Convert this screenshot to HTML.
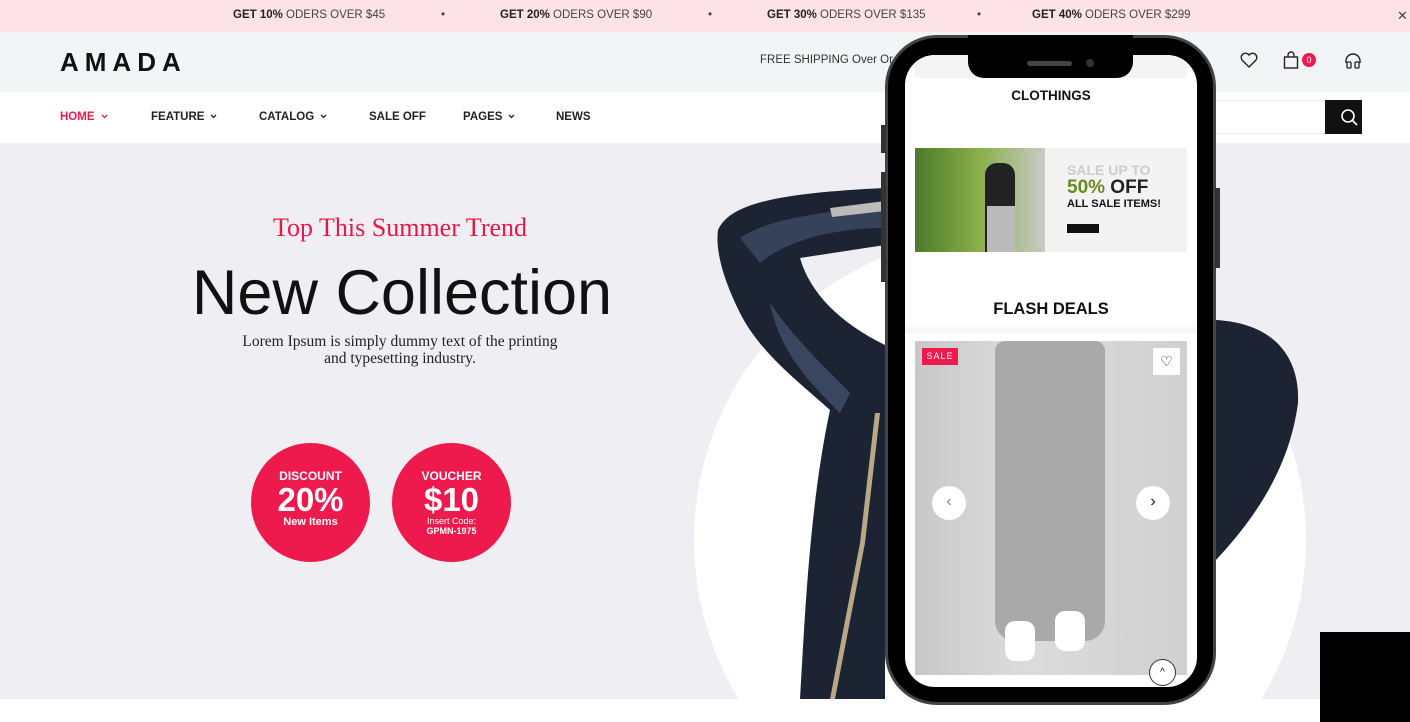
<!DOCTYPE html>
<html><head><meta charset="utf-8"><style>
*{margin:0;padding:0;box-sizing:border-box}
html,body{width:1410px;height:722px;overflow:hidden}
body{position:relative;background:#fff;font-family:"Liberation Sans",sans-serif}
.abs{position:absolute}
.top{left:0;top:0;width:1410px;height:32px;background:#fde3e7;font-size:11.5px;color:#444}
.top span{position:absolute;top:9px;white-space:nowrap}
.top b{color:#222}
.hdr{left:0;top:32px;width:1410px;height:60px;background:#f3f4f6}
.nav{left:0;top:92px;width:1410px;height:51px;background:#fff;font-size:11.5px;font-weight:bold;color:#222}
.nav span{position:absolute;top:19px;white-space:nowrap}
.nav svg{margin-left:6px;vertical-align:1px}
.hero{left:0;top:143px;width:1410px;height:556px;background:#efeff3;overflow:hidden}
.circ{border-radius:50%;background:#ee1a4d;color:#fff;text-align:center;width:119px;height:119px}
</style></head><body>
<div class="abs top">
<span style="left:233px"><b>GET 10%</b> ODERS OVER $45</span>
<span style="left:441px">•</span>
<span style="left:500px"><b>GET 20%</b> ODERS OVER $90</span>
<span style="left:708px">•</span>
<span style="left:767px"><b>GET 30%</b> ODERS OVER $135</span>
<span style="left:977px">•</span>
<span style="left:1032px"><b>GET 40%</b> ODERS OVER $299</span>
<span style="left:1397px;top:8px;font-size:13px">✕</span>
</div>
<div class="abs hdr">
<div class="abs" style="left:60px;top:15px;font-size:26px;font-weight:bold;letter-spacing:6px;color:#111">AMADA</div>
<div class="abs" style="left:760px;top:22px;font-size:11.5px;color:#333">FREE SHIPPING Over Or</div>
<svg class="abs" style="left:1240px;top:20px" width="18" height="16" viewBox="0 0 18 16"><path d="M9 15L2 8A4 4 0 0 1 9 3A4 4 0 0 1 16 8Z" fill="none" stroke="#222" stroke-width="1.4"/></svg>
<svg class="abs" style="left:1283px;top:19px" width="16" height="18" viewBox="0 0 16 18"><rect x="1.5" y="6" width="13" height="11" fill="none" stroke="#222" stroke-width="1.4"/><path d="M5 6V4a3 3 0 0 1 6 0v2" fill="none" stroke="#222" stroke-width="1.4"/></svg>
<div class="abs" style="left:1302px;top:21px;width:14px;height:14px;border-radius:50%;background:#ee1a4d;color:#fff;font-size:9px;text-align:center;line-height:14px">0</div>
<svg class="abs" style="left:1344px;top:20px" width="18" height="18" viewBox="0 0 18 18"><path d="M2 11V9a7 7 0 0 1 14 0v2" fill="none" stroke="#222" stroke-width="1.4"/><rect x="3" y="10" width="4" height="6" rx="1" fill="none" stroke="#222" stroke-width="1.3"/><rect x="11" y="10" width="4" height="6" rx="1" fill="none" stroke="#222" stroke-width="1.3"/></svg>
</div>
<div class="abs nav">
<span style="left:60px;color:#ee1a4d">HOME<svg width="7" height="5" viewBox="0 0 7 5"><path d="M1 1l2.5 2.5L6 1" fill="none" stroke="#ee1a4d" stroke-width="1.3"/></svg></span>
<span style="left:151px">FEATURE<svg width="7" height="5" viewBox="0 0 7 5"><path d="M1 1l2.5 2.5L6 1" fill="none" stroke="#222" stroke-width="1.3"/></svg></span>
<span style="left:259px">CATALOG<svg width="7" height="5" viewBox="0 0 7 5"><path d="M1 1l2.5 2.5L6 1" fill="none" stroke="#222" stroke-width="1.3"/></svg></span>
<span style="left:369px">SALE OFF</span>
<span style="left:463px">PAGES<svg width="7" height="5" viewBox="0 0 7 5"><path d="M1 1l2.5 2.5L6 1" fill="none" stroke="#222" stroke-width="1.3"/></svg></span>
<span style="left:556px">NEWS</span>
<div class="abs" style="left:1190px;top:8px;width:136px;height:34px;border:1px solid #eee;border-right:none"></div>
<div class="abs" style="left:1325px;top:8px;width:37px;height:34px;background:#111"><svg width="37" height="34" viewBox="0 0 37 34"><circle cx="17" cy="16" r="6" fill="none" stroke="#fff" stroke-width="1.6"/><path d="M21.5 20.5L26 25" stroke="#fff" stroke-width="1.6"/></svg></div>
</div>
<div class="abs hero">
<div class="abs" style="left:694px;top:91px;width:612px;height:612px;border-radius:50%;background:#fff"></div>
<svg class="abs" style="left:700px;top:0" width="610" height="556" viewBox="0 0 610 556">
<path d="M18 87 C30 60 80 50 185 45 L185 102 L100 115 C110 150 140 180 185 202 L185 556 L100 556 C105 470 110 360 130 267 C100 240 60 210 40 170 C25 140 15 110 18 87Z" fill="#1c2433"/>
<path d="M40 95 C70 75 120 70 185 62 L185 85 C140 85 90 95 60 120Z" fill="#36415a"/>
<path d="M70 160 C90 190 120 220 150 250 L140 270 C110 240 80 210 70 160Z" fill="#3a4560"/>
<path d="M130 65 L185 58 L185 68 L132 74Z" fill="#bbb"/>
<path d="M175 270 L160 400 L130 556 L135 556 L165 400 L180 270Z" fill="#b8a888"/>
<path d="M516 177 C570 180 600 210 598 260 C590 320 560 370 516 417Z" fill="#1c2433"/>
</svg>
<div class="abs" style="left:0;top:70px;width:800px;text-align:center;font-family:'Liberation Serif',serif;font-size:26px;color:#e5174b">Top This Summer Trend</div>
<div class="abs" style="left:0;top:114px;width:804px;text-align:center;font-size:63px;color:#111;letter-spacing:0">New Collection</div>
<div class="abs" style="left:0;top:190px;width:800px;text-align:center;font-family:'Liberation Serif',serif;font-size:15.5px;color:#222;line-height:17px">Lorem Ipsum is simply dummy text of the printing<br>and typesetting industry.</div>
<div class="abs circ" style="left:251px;top:300px"><div style="font-size:12px;font-weight:bold;margin-top:26px">DISCOUNT</div><div style="font-size:33px;font-weight:bold;line-height:33px">20%</div><div style="font-size:11px;font-weight:bold">New Items</div></div>
<div class="abs circ" style="left:392px;top:300px"><div style="font-size:12px;font-weight:bold;margin-top:26px">VOUCHER</div><div style="font-size:33px;font-weight:bold;line-height:33px">$10</div><div style="font-size:9px;line-height:10px">Insert Code:</div><div style="font-size:9px;font-weight:bold;line-height:10px">GPMN-1975</div></div>
</div>
<!-- phone -->
<div class="abs" style="left:885px;top:35px;width:331px;height:670px;border-radius:52px;background:#000;border:3px solid #444"></div>
<div class="abs" style="left:881px;top:125px;width:5px;height:28px;background:#333"></div>
<div class="abs" style="left:881px;top:172px;width:5px;height:110px;background:#333"></div>
<div class="abs" style="left:1215px;top:188px;width:5px;height:80px;background:#333"></div>
<div class="abs" style="left:905px;top:55px;width:292px;height:632px;border-radius:30px;background:#fff;overflow:hidden">
<div class="abs" style="left:10px;top:0;width:272px;height:23px;background:#f4f4f4"></div>
<div class="abs" style="left:0;top:33px;width:292px;text-align:center;font-size:13.5px;font-weight:bold;color:#111">CLOTHINGS</div>
<div class="abs" style="left:10px;top:93px;width:272px;height:104px;background:#f3f3f3">
<div class="abs" style="left:0;top:0;width:130px;height:104px;background:linear-gradient(90deg,#4d7a2a,#8ab04a 50%,#c9c9c9)"></div>
<div class="abs" style="left:70px;top:15px;width:30px;height:89px;background:#222;border-radius:12px 12px 0 0"></div>
<div class="abs" style="left:72px;top:58px;width:28px;height:46px;background:#bbb"></div>
<div class="abs" style="left:152px;top:15px;font-size:14px;font-weight:bold;color:#ccc;line-height:15px">SALE UP TO</div>
<div class="abs" style="left:152px;top:30px;font-size:19px;font-weight:bold;color:#222;line-height:20px"><span style="color:#6a8a22">50%</span> OFF</div>
<div class="abs" style="left:152px;top:50px;font-size:11px;font-weight:bold;color:#111">ALL SALE ITEMS!</div>
<div class="abs" style="left:152px;top:76px;width:32px;height:9px;background:#111"></div>
</div>
<div class="abs" style="left:0;top:245px;width:292px;text-align:center;font-size:16.5px;font-weight:bold;color:#111">FLASH DEALS</div>
<div class="abs" style="left:0;top:268px;width:292px;height:10px;background:linear-gradient(#fff,#f3f3f3)"></div>
<div class="abs" style="left:10px;top:286px;width:272px;height:334px;background:linear-gradient(90deg,#c8c8c8,#dcdcdc 40%,#d0d0d0)">
<div class="abs" style="left:80px;top:0;width:110px;height:300px;background:#a9a9a9;border-radius:10px 10px 20px 20px"></div>
<div class="abs" style="left:90px;top:280px;width:30px;height:40px;background:#fff;border-radius:10px"></div>
<div class="abs" style="left:140px;top:270px;width:30px;height:40px;background:#fff;border-radius:10px"></div>
<div class="abs" style="left:7px;top:7px;width:36px;height:17px;background:#ee1a4d;color:#fff;font-size:9px;text-align:center;line-height:17px;letter-spacing:1px">SALE</div>
<div class="abs" style="left:238px;top:7px;width:27px;height:27px;background:#fff;text-align:center;font-size:14px;line-height:26px">♡</div>
<div class="abs" style="left:17px;top:145px;width:34px;height:34px;border-radius:50%;background:#fff;text-align:center;line-height:32px;color:#888;font-size:16px">‹</div>
<div class="abs" style="left:221px;top:145px;width:34px;height:34px;border-radius:50%;background:#fff;text-align:center;line-height:32px;color:#111;font-size:16px">›</div>
</div>
<div class="abs" style="left:244px;top:604px;width:27px;height:27px;border-radius:50%;background:#fff;border:1px solid #333;text-align:center;font-size:10px;line-height:25px">^</div>
</div>
<div class="abs" style="left:968px;top:35px;width:165px;height:43px;background:#000;border-radius:0 0 16px 16px"></div>
<div class="abs" style="left:1027px;top:61px;width:45px;height:5px;background:#444;border-radius:3px"></div>
<div class="abs" style="left:1086px;top:59px;width:8px;height:8px;background:#333;border-radius:50%"></div>
<div class="abs" style="left:1320px;top:632px;width:90px;height:90px;background:#000"></div>
</body></html>
